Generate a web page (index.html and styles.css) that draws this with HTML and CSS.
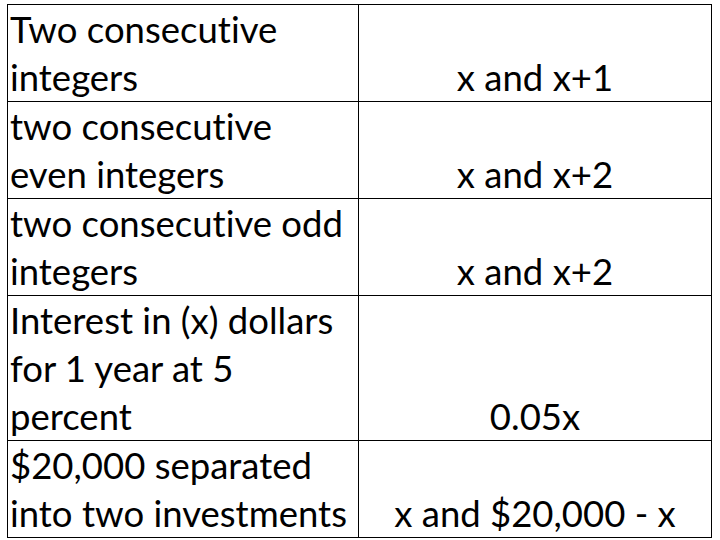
FILE: index.html
```html
<!DOCTYPE html>
<html>
<head>
<meta charset="utf-8">
<link rel="stylesheet" href="styles.css">
</head>
<body>
<table class="grid">
  <colgroup><col class="c1"><col class="c2"></colgroup>
  <tr>
    <td class="term">Two consecutive<br>integers</td>
    <td class="expr">x and x+1</td>
  </tr>
  <tr>
    <td class="term">two consecutive<br>even integers</td>
    <td class="expr">x and x+2</td>
  </tr>
  <tr>
    <td class="term">two consecutive odd<br>integers</td>
    <td class="expr">x and x+2</td>
  </tr>
  <tr>
    <td class="term">Interest in (x) dollars<br>for 1 year at 5<br>percent</td>
    <td class="expr">0.05x</td>
  </tr>
  <tr>
    <td class="term">$20,000 separated<br>into two investments</td>
    <td class="expr">x and $20,000 - x</td>
  </tr>
</table>
</body>
</html>
```
FILE: styles.css
```css
html, body {
  margin: 0;
  padding: 0;
  background: #ffffff;
}
.grid {
  margin: 4px 0 0 7px;
  border-collapse: collapse;
  table-layout: fixed;
  width: 704px;
  font-family: Lato, "Liberation Sans", sans-serif;
  font-size: 36.5px;
  line-height: 48px;
  font-variant-ligatures: none;
  color: #000;
}
.c1 { width: 351px; }
.c2 { width: 353px; }
.grid td {
  border: 1px solid #000;
  padding: 0 2px;
  vertical-align: bottom;
  white-space: nowrap;
}
.term { text-align: left; }
.expr { text-align: center; }
```
